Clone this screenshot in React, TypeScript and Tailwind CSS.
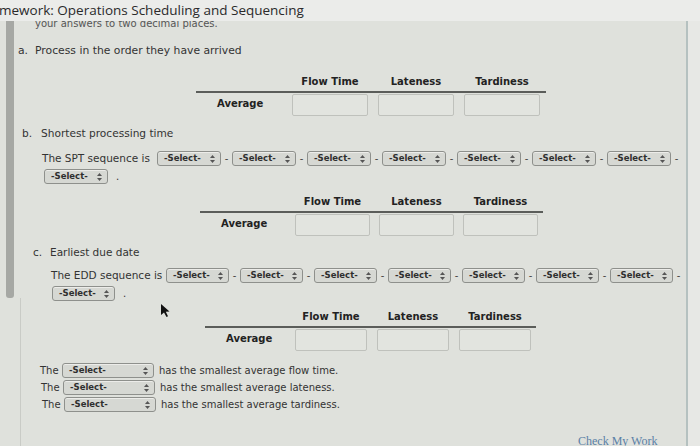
import React from 'react';

const Arrows = () => (
  <svg width="5" height="8" viewBox="0 0 5 8" className="shrink-0">
    <polygon points="2.5,0 5,3 0,3" fill="#555" />
    <polygon points="0,5 5,5 2.5,8" fill="#555" />
  </svg>
);

const Select: React.FC<{ w?: string }> = ({ w = 'w-[64px]' }) => (
  <span
    className={`${w} h-[15px] shrink-0 inline-flex items-center justify-between rounded-[3px] border border-[#8e908c] bg-[#d6d8d3] pl-[6px] pr-[5px] text-[8.5px] font-bold leading-none text-[#2f2f2f] shadow-[inset_0_1px_0_#ecece9]`}
  >
    -Select-
    <Arrows />
  </span>
);

const Sep: React.FC<{ w?: string }> = ({ w = 'w-[11px]' }) => (
  <span className={`${w} shrink-0 text-center text-[10px] text-[#444]`}>-</span>
);

type TableCfg = { ml: string; avg: string; col: string; box: string; line: string };

const ResultTable: React.FC<{ cfg: TableCfg }> = ({ cfg }) => (
  <div className={cfg.ml}>
    <div className={`${cfg.line} h-[18px] pb-[3px] flex items-center border-b-2 border-[#5b5d5a]`}>
      <div className={`${cfg.avg} shrink-0`} />
      {['Flow Time', 'Lateness', 'Tardiness'].map((h) => (
        <div key={h} className={`${cfg.col} shrink-0`}>
          <div className={`${cfg.box} text-center text-[10px] font-bold text-[#222]`}>{h}</div>
        </div>
      ))}
    </div>
    <div className="mt-[1px] h-[22px] flex items-center">
      <div className={`${cfg.avg} shrink-0 pb-[3px] pl-[21px] text-[10px] font-bold text-[#222]`}>Average</div>
      {[0, 1, 2].map((i) => (
        <div key={i} className={`${cfg.col} shrink-0`}>
          <div className={`${cfg.box} h-[22px] rounded-[2px] border border-[#bfc1bc] bg-[#e2e4df]`} />
        </div>
      ))}
    </div>
  </div>
);

const tables: Record<string, TableCfg> = {
  a: { ml: 'ml-[178px]', avg: 'w-[96px]', col: 'w-[86px]', box: 'w-[76px]', line: 'w-[350px]' },
  b: { ml: 'ml-[182px]', avg: 'w-[95px]', col: 'w-[84px]', box: 'w-[75px]', line: 'w-[343px]' },
  c: { ml: 'ml-[187px]', avg: 'w-[90px]', col: 'w-[82px]', box: 'w-[72px]', line: 'w-[331px]' },
};

const Sequence: React.FC<{ label: string; pad: string; pad2: string; sel: string }> = ({ label, pad, pad2, sel }) => (
  <>
    <div className={`${pad} h-[15px] flex items-center whitespace-nowrap text-[10.5px] text-[#333]`}>
      <span className="w-[115px] shrink-0">{label}</span>
      {[0, 1, 2, 3, 4, 5, 6].map((i) => (
        <React.Fragment key={i}>
          <Select w={sel} />
          <Sep />
        </React.Fragment>
      ))}
    </div>
    <div className={`${pad2} mt-[3px] h-[15px] flex items-center text-[10px] text-[#333]`}>
      <Select w={sel} />
      <span className="ml-[8px]">.</span>
    </div>
  </>
);

const answers = ['flow time', 'lateness', 'tardiness'];

export default function App() {
  return (
    <div className="relative w-[700px] h-[446px] overflow-hidden bg-[#dfe1dc] font-['DejaVu_Sans',sans-serif]">
      <div className="h-[21px] bg-[#ebecea] flex items-center font-['Open_Sans',sans-serif] text-[13.5px] text-[#2a2a2a] -ml-[1px]">
        mework: Operations Scheduling and Sequencing
      </div>

      <div className="flex">
        <div className="w-[18px] shrink-0">
          <div className="ml-[6px] w-[8px] h-[277px] rounded-b-[3px] bg-[#a6a8a4]" />
          <div className="ml-[20px] w-[1px] h-[160px] bg-[#c9cbc6]" />
        </div>

        <div className="flex-1">
          <div className="h-[10px] overflow-hidden pl-[17px]">
            <div className="-mt-[4px] text-[10px] leading-[14px] text-[#555]">your answers to two decimal places.</div>
          </div>

          <div className="mt-[14px] h-[12px] flex items-center text-[10.8px] text-[#333]">
            <span className="w-[17px]">a.</span>
            <span>Process in the order they have arrived</span>
          </div>

          <div className="mt-[18px]">
            <ResultTable cfg={tables.a} />
          </div>

          <div className="mt-[12px] pl-[4px] h-[12px] flex items-center text-[10.6px] text-[#333]">
            <span className="w-[19px]">b.</span>
            <span>Shortest processing time</span>
          </div>

          <div className="mt-[11px]">
            <Sequence label="The SPT sequence is" pad="pl-[24px]" pad2="pl-[26px]" sel="w-[64px]" />
          </div>

          <div className="mt-[11px]">
            <ResultTable cfg={tables.b} />
          </div>

          <div className="mt-[11px] pl-[15px] h-[12px] flex items-center text-[10.5px] text-[#333]">
            <span className="w-[17px]">c.</span>
            <span>Earliest due date</span>
          </div>

          <div className="mt-[9px]">
            <Sequence label="The EDD sequence is" pad="pl-[33px]" pad2="pl-[34px]" sel="w-[63px]" />
          </div>

          <div className="mt-[9px]">
            <ResultTable cfg={tables.c} />
          </div>

          <div className="mt-[12px] flex flex-col gap-[2px]">
            {answers.map((a, i) => (
              <div
                key={a}
                className={`${i === 0 ? 'pl-[22px]' : i === 1 ? 'pl-[23px]' : 'pl-[24px]'} h-[15px] flex items-center text-[10px] text-[#333]`}
              >
                <span className="w-[22px] shrink-0">The</span>
                <Select w="w-[92px]" />
                <span className="ml-[5px]">has the smallest average {a}.</span>
              </div>
            ))}
          </div>

          <div className="mt-[22px] ml-[560px] font-['Liberation_Serif',serif] text-[12px] leading-[14px] text-[#5a80a6]">
            Check My Work
          </div>
        </div>

        <div className="w-[14px] shrink-0 flex">
          <div className="w-[2px] h-[446px] bg-[#b5c1c0]" />
          <div className="flex-1 bg-[#e7e8e5]" />
        </div>
      </div>

      <svg className="absolute left-[160px] top-[303px]" width="11" height="15" viewBox="0 0 11 15">
        <path d="M1 1 L1 12 L4 9.5 L6.5 14 L8 13.2 L5.8 8.8 L9.5 8.6 Z" fill="#111" />
      </svg>
    </div>
  );
}
